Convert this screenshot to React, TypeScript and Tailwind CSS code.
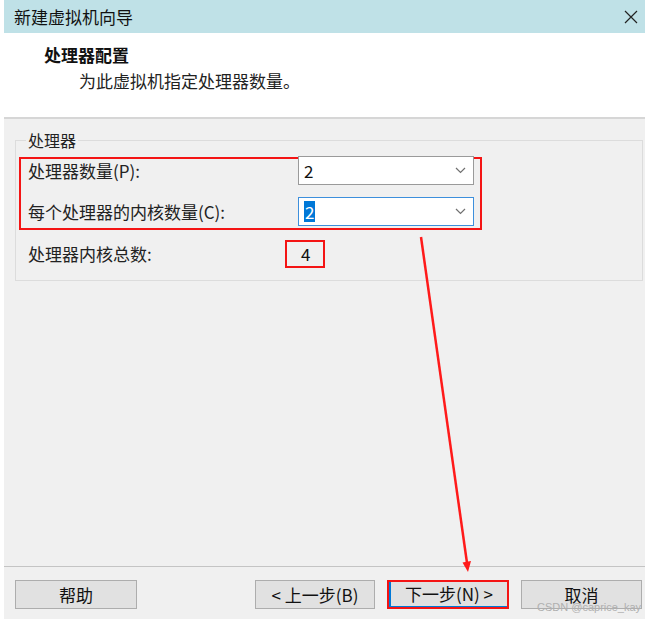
import React from 'react';

const font = { fontFamily: '"Noto Sans CJK SC", "Noto Sans", sans-serif' };

function Chevron() {
  return (
    <svg width="11" height="7" viewBox="0 0 11 7" className="shrink-0">
      <path d="M1 1 L5.5 5.5 L10 1" fill="none" stroke="#707070" strokeWidth="1.2" />
    </svg>
  );
}

function Combo({ value, focused }: { value: string; focused?: boolean }) {
  return (
    <div
      className={
        'w-[176px] h-[29px] bg-white border flex items-center justify-between pl-[5px] pr-[7px] ' +
        (focused ? 'border-[#3d8fdc]' : 'border-[#9a9a9a]')
      }
    >
      {focused ? (
        <span className="bg-[#0078d7] text-white text-[17px] leading-[21px] px-[1px]">{value}</span>
      ) : (
        <span className="text-[17px] leading-[21px] text-[#111]">{value}</span>
      )}
      <Chevron />
    </div>
  );
}

function Btn({ children, w, className = '' }: { children: React.ReactNode; w: string; className?: string }) {
  return (
    <div
      className={
        'h-[29px] bg-[#e1e1e1] border border-[#adadad] flex items-center justify-center text-[17px] text-[#111] ' +
        w +
        ' ' +
        className
      }
    >
      {children}
    </div>
  );
}

export default function App() {
  return (
    <div className="relative w-[645px] h-[619px] bg-white pl-[4px] flex overflow-hidden" style={font}>
      <div className="flex-1 flex flex-col">
        {/* title bar */}
        <div className="h-[33px] bg-[#bfe1e7] flex items-center justify-between pl-[10px] pr-[7px]">
          <span className="text-[17px] leading-[22px] text-[#111]">新建虚拟机向导</span>
          <svg width="14" height="14" viewBox="0 0 14 14">
            <path d="M1 1 L13 13 M13 1 L1 13" stroke="#222" strokeWidth="1.2" />
          </svg>
        </div>

        {/* header */}
        <div className="h-[84px] bg-white pt-[11px]">
          <div className="pl-[40px] text-[17px] leading-[22px] font-bold text-[#111]">处理器配置</div>
          <div className="pl-[75px] mt-[4px] text-[17px] leading-[22px] text-[#222]">为此虚拟机指定处理器数量。</div>
        </div>
        <div className="h-[2px] bg-[#d6d6d6]" />

        {/* body */}
        <div className="flex-1 bg-[#f0f0f0] pt-[12px]">
          <fieldset className="ml-[11px] mr-[2px] border border-[#dcdcdc] pb-[12px]">
            <legend className="ml-[10px] px-[2px] text-[16px] leading-[18px] text-[#222]">处理器</legend>
            <div className="ml-[3px] mt-[8px] w-[463px] h-[73px] border-2 border-[#f41414] pl-[7px] pr-[6px]">
              <div className="-mt-[3px] h-[29px] flex items-center justify-between">
                <span className="text-[17px] text-[#222]">处理器数量(P):</span>
                <Combo value="2" />
              </div>
              <div className="mt-[12px] h-[29px] flex items-center justify-between">
                <span className="text-[17px] text-[#222]">每个处理器的内核数量(C):</span>
                <Combo value="2" focused />
              </div>
            </div>
            <div className="mt-[10px] pl-[12px] flex items-center">
              <span className="w-[257px] text-[17px] text-[#222]">处理器内核总数:</span>
              <div className="w-[40px] h-[28px] border-2 border-[#f41414] flex items-center pl-[14px] text-[17px] text-[#111]">
                4
              </div>
            </div>
          </fieldset>
        </div>

        {/* footer */}
        <div className="h-[1px] bg-[#c4c4c4]" />
        <div className="h-[52px] bg-[#f0f0f0] pt-[13px] flex items-start">
          <Btn w="w-[122px]" className="ml-[11px]">帮助</Btn>
          <Btn w="w-[120px]" className="ml-[118px]">&lt; 上一步(B)</Btn>
          <div className="ml-[12px] w-[122px] h-[29px] border-2 border-[#f41414]">
            <div className="w-full h-full bg-[#e1e1e1] border-l-2 border-b border-[#0078d7] flex items-center justify-center text-[17px] text-[#111]">
              下一步(N) &gt;
            </div>
          </div>
          <Btn w="w-[121px]" className="ml-[12px]">取消</Btn>
        </div>
      </div>

      {/* annotation arrow */}
      <svg className="absolute left-0 top-0 pointer-events-none" width="645" height="619">
        <line x1="421" y1="237" x2="467" y2="563" stroke="#ff1a1a" strokeWidth="2.5" />
        <polygon points="468,572 471,561 462.5,562.5" fill="#ff1a1a" />
      </svg>

      {/* watermark */}
      <span
        className="absolute left-[537px] top-[601px] whitespace-nowrap text-[11px] leading-[13px] text-[#b0b0b0]"
        style={{ fontFamily: '"Liberation Sans", sans-serif' }}
      >
        CSDN @caprice_kay
      </span>
    </div>
  );
}
